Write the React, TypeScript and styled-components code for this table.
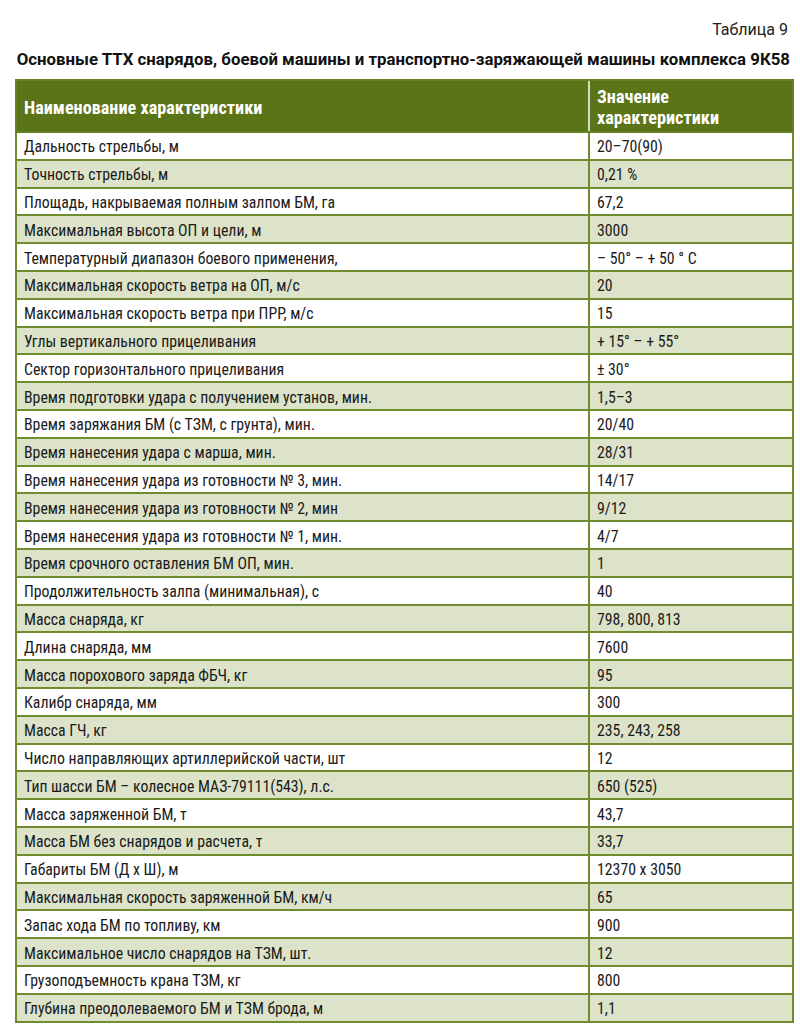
import React from "react";
import styled, { createGlobalStyle } from "styled-components";

const Global = createGlobalStyle`
  html, body { margin: 0; padding: 0; background: #ffffff; }
  body { font-family: "Roboto Condensed", "Open Sans", sans-serif; color: #1a1a1a; }
`;

const Page = styled.div`
  width: 800px;
  padding: 20px 8px 0 15px;
  box-sizing: border-box;
`;

const Caption = styled.div`
  text-align: right;
  font-family: Roboto, "Liberation Sans", sans-serif;
  font-size: 16px;
  line-height: 20px;
  color: #222;
  padding-right: 4px;
`;

const Title = styled.h1`
  margin: 8px 0 0 0;
  font-family: Roboto, "Liberation Sans", sans-serif;
  font-size: 16.8px;
  line-height: 22px;
  font-weight: 700;
  text-align: right;
  color: #111;
  white-space: nowrap;
  padding-right: 2px;
`;

const Table = styled.table`
  margin-top: 9px;
  width: 777px;
  border-collapse: collapse;
  table-layout: fixed;
  border: 2px solid #648125;
`;

const HeadRow = styled.tr`
  height: 52px;
  background: #5b7418;
`;

const HeadCell = styled.th<{ $divider?: boolean }>`
  color: #ffffff;
  font-size: 18.2px;
  font-weight: 700;
  text-align: left;
  line-height: 21px;
  padding: 2px 7px 0 7px;
  border-top: 2px solid #648125;
  border-bottom: 2px solid #648125;
  border-left: ${(p) => (p.$divider ? "2px solid #d4dcbd" : "2px solid #648125")};
`;

const Row = styled.tr<{ $alt: boolean }>`
  height: 27.8px;
  background: ${(p) => (p.$alt ? "#dce3c8" : "#ffffff")};
`;

const Cell = styled.td`
  padding: 3px 6px 0 7px;
  font-size: 15.8px;
  line-height: 20px;
  border: 2px solid #6f8d2e;
  color: #1a1a1a;
  white-space: nowrap;
  vertical-align: middle;
`;

const rows: [string, string][] = [
  ["Дальность стрельбы, м", "20–70(90)"],
  ["Точность стрельбы, м", "0,21 %"],
  ["Площадь, накрываемая полным залпом БМ, га", "67,2"],
  ["Максимальная высота ОП и цели, м", "3000"],
  ["Температурный диапазон боевого применения,", "– 50° – + 50 ° С"],
  ["Максимальная скорость ветра на ОП, м/с", "20"],
  ["Максимальная скорость ветра при ПРР, м/с", "15"],
  ["Углы вертикального прицеливания", "+ 15° – + 55°"],
  ["Сектор горизонтального прицеливания", "± 30°"],
  ["Время подготовки удара с получением установ, мин.", "1,5–3"],
  ["Время заряжания БМ (с ТЗМ, с грунта), мин.", "20/40"],
  ["Время нанесения удара с марша, мин.", "28/31"],
  ["Время нанесения удара из готовности № 3, мин.", "14/17"],
  ["Время нанесения удара из готовности № 2, мин", "9/12"],
  ["Время нанесения удара из готовности № 1, мин.", "4/7"],
  ["Время срочного оставления БМ ОП, мин.", "1"],
  ["Продолжительность залпа (минимальная), с", "40"],
  ["Масса снаряда, кг", "798, 800, 813"],
  ["Длина снаряда, мм", "7600"],
  ["Масса порохового заряда ФБЧ, кг", "95"],
  ["Калибр снаряда, мм", "300"],
  ["Масса ГЧ, кг", "235, 243, 258"],
  ["Число направляющих артиллерийской части, шт", "12"],
  ["Тип шасси БМ – колесное МАЗ-79111(543), л.с.", "650 (525)"],
  ["Масса заряженной БМ, т", "43,7"],
  ["Масса БМ без снарядов и расчета, т", "33,7"],
  ["Габариты БМ (Д х Ш), м", "12370 х 3050"],
  ["Максимальная скорость заряженной БМ, км/ч", "65"],
  ["Запас хода БМ по топливу, км", "900"],
  ["Максимальное число снарядов на ТЗМ, шт.", "12"],
  ["Грузоподъемность крана ТЗМ, кг", "800"],
  ["Глубина преодолеваемого БМ и ТЗМ брода, м", "1,1"],
];

export default function App() {
  return (
    <Page>
      <Global />
      <Caption>Таблица 9</Caption>
      <Title>Основные ТТХ снарядов, боевой машины и транспортно-заряжающей машины комплекса 9К58</Title>
      <Table>
        <colgroup>
          <col style={{ width: 573 }} />
          <col style={{ width: 204 }} />
        </colgroup>
        <thead>
          <HeadRow>
            <HeadCell>Наименование характеристики</HeadCell>
            <HeadCell $divider>
              Значение
              <br />
              характеристики
            </HeadCell>
          </HeadRow>
        </thead>
        <tbody>
          {rows.map(([name, value], i) => (
            <Row key={i} $alt={i % 2 === 1}>
              <Cell>{name}</Cell>
              <Cell>{value}</Cell>
            </Row>
          ))}
        </tbody>
      </Table>
    </Page>
  );
}
